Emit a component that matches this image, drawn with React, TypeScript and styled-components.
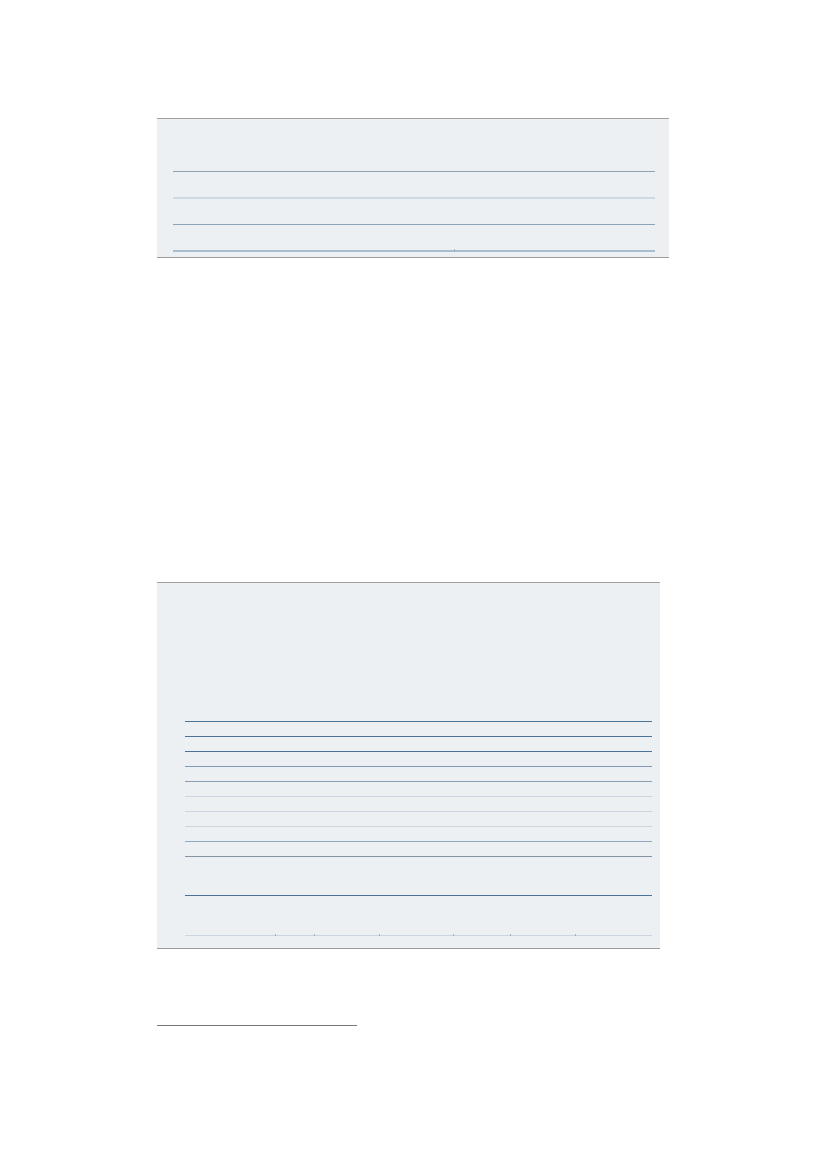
import React from "react";
import styled, { createGlobalStyle } from "styled-components";

const Global = createGlobalStyle`
  html, body { margin: 0; padding: 0; background: #ffffff; }
  body { font-family: "Liberation Sans", Arial, sans-serif; }
  * { box-sizing: border-box; }
`;

const Page = styled.div`
  width: 827px;
  height: 1169px;
  padding: 118px 0 0 157px;
  display: flex;
  flex-direction: column;
  background: #ffffff;
`;

const Panel = styled.section<{ $w: number; $padL: number; $padR: number; $padB: number; $mb: number }>`
  width: ${(p) => p.$w}px;
  background: #ecf0f3;
  border-top: 1px solid #a2a2a2;
  border-bottom: 1.5px solid #9c9c9c;
  padding: 0 ${(p) => p.$padR}px ${(p) => p.$padB}px ${(p) => p.$padL}px;
  margin-bottom: ${(p) => p.$mb}px;
  display: flex;
  flex-direction: column;
`;

const Row = styled.div<{ $h: number }>`
  height: ${(p) => p.$h}px;
  display: flex;
`;

const Cell = styled.div<{ $w: number; $lw: number; $c: string; $tick?: boolean }>`
  position: relative;
  width: ${(p) => p.$w}px;
  height: 100%;
  border-bottom: ${(p) => p.$lw}px solid ${(p) => p.$c};
  &::after {
    content: "";
    display: ${(p) => (p.$tick ? "block" : "none")};
    position: absolute;
    right: 0;
    bottom: -${(p) => p.$lw}px;
    width: 1px;
    height: ${(p) => p.$lw + 0.5}px;
    background: #a3afbb;
  }
  &:last-child::after { display: none; }
`;

const FootRule = styled.hr`
  width: 200px;
  margin: 0;
  border: none;
  border-top: 1px solid #777777;
`;

type Line = { h: number; w: number; c: string; tick?: boolean };

const DARK = "#4b7398";
const MID = "#8da4bb";
const LIGHT = "#cbd6e0";

const panel1Cols = [282, 200];
const panel1Rows: Line[] = [
  { h: 53, w: 1, c: MID },
  { h: 27, w: 2, c: "#cfd9e2" },
  { h: 26, w: 1, c: MID },
  { h: 26.5, w: 2, c: "#a7bdd1", tick: true },
];

const panel2Cols = [91, 39, 65, 75, 57, 65, 76];
const panel2Rows: Line[] = [
  { h: 139, w: 1, c: DARK },
  { h: 15, w: 1, c: DARK },
  { h: 15, w: 1, c: DARK },
  { h: 15, w: 1, c: "#7f9bb6" },
  { h: 15, w: 1, c: "#8c9fb2" },
  { h: 15, w: 1.5, c: LIGHT },
  { h: 15, w: 1.5, c: LIGHT },
  { h: 15, w: 1.5, c: LIGHT },
  { h: 15, w: 1.5, c: "#8fa8c1" },
  { h: 15, w: 1.5, c: "#8494a4" },
  { h: 39, w: 1, c: DARK },
  { h: 40, w: 1.5, c: LIGHT, tick: true },
];

function Table({ cols, rows }: { cols: number[]; rows: Line[] }) {
  return (
    <>
      {rows.map((r, i) => (
        <Row key={i} $h={r.h}>
          {cols.map((w, j) => (
            <Cell key={j} $w={w} $lw={r.w} $c={r.c} $tick={r.tick} />
          ))}
        </Row>
      ))}
    </>
  );
}

export default function App() {
  return (
    <>
      <Global />
      <Page>
        <Panel $w={512} $padL={16} $padR={14} $padB={5} $mb={324}>
          <Table cols={panel1Cols} rows={panel1Rows} />
        </Panel>
        <Panel $w={503} $padL={28} $padR={8} $padB={12.5} $mb={76}>
          <Table cols={panel2Cols} rows={panel2Rows} />
        </Panel>
        <FootRule />
      </Page>
    </>
  );
}
